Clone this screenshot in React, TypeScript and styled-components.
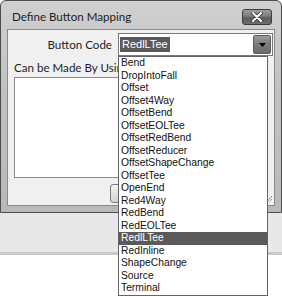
import styled, { createGlobalStyle } from 'styled-components';

const GlobalStyle = createGlobalStyle`
  html, body {
    margin: 0;
    padding: 0;
    background: #fff;
  }
  #root {
    width: 282px;
    height: 297px;
    overflow: hidden;
  }
`;

const codes = [
  'Bend',
  'DropIntoFall',
  'Offset',
  'Offset4Way',
  'OffsetBend',
  'OffsetEOLTee',
  'OffsetRedBend',
  'OffsetReducer',
  'OffsetShapeChange',
  'OffsetTee',
  'OpenEnd',
  'Red4Way',
  'RedBend',
  'RedEOLTee',
  'RedlLTee',
  'RedInline',
  'ShapeChange',
  'Source',
  'Terminal',
];

const selected = 'RedlLTee';

const Screen = styled.div`
  position: relative;
  width: 282px;
  height: 297px;
  display: flex;
  flex-direction: column;
  background: #fff;
  font-family: Lato, 'Noto Sans', sans-serif;
`;

const Window = styled.div`
  height: 213px;
  box-sizing: border-box;
  border: 1px solid #4c4c4c;
  border-radius: 6px 6px 0 0;
  background: linear-gradient(180deg, #d0d0d0 0%, #c2c2c2 40%, #b9b9b9 100%);
  padding: 0 6px 6px;
  display: flex;
  flex-direction: column;
`;

const TitleBar = styled.div`
  height: 28px;
  box-sizing: border-box;
  padding: 3px 3px 0 5px;
  display: flex;
  align-items: center;
  justify-content: space-between;
`;

const Title = styled.span`
  font-size: 11.6px;
  color: #1e1e1e;
`;

const CloseButton = styled.div`
  width: 30px;
  height: 16px;
  box-sizing: border-box;
  border: 1px solid #3c3c3c;
  border-radius: 3px;
  background: linear-gradient(180deg, #a0a0a0 0%, #7a7a7a 45%, #5c5c5c 55%, #6e6e6e 100%);
  display: flex;
  align-items: center;
  justify-content: center;
`;

const Client = styled.div`
  position: relative;
  flex: 1;
  border: 1px solid #8a8a8a;
  background: #f0f0f0;
  display: flex;
  flex-direction: column;
`;

const CodeRow = styled.div`
  display: grid;
  grid-template-columns: 104px 1fr;
  column-gap: 6px;
  align-items: center;
  padding: 3px 1px 0 0;
`;

const Label = styled.span`
  font-size: 11.6px;
  color: #1e1e1e;
  white-space: nowrap;
`;

const RightLabel = styled(Label)`
  text-align: right;
`;

const Combo = styled.div`
  height: 23px;
  box-sizing: border-box;
  border: 1px solid #7a7a7a;
  background: #fff;
  display: flex;
  align-items: center;
  justify-content: space-between;
  padding: 0 1px 0 1px;
`;

const ComboText = styled.span`
  font-family: 'Liberation Sans', Arial, sans-serif;
  font-size: 11px;
  line-height: 15px;
  padding: 0 2px 0 2px;
  background: #5a5a5a;
  color: #fff;
`;

const DropButton = styled.div`
  width: 18px;
  height: 19px;
  box-sizing: border-box;
  border: 1px solid #5a5a5a;
  border-radius: 2px;
  background: linear-gradient(180deg, #9a9a9a 0%, #7c7c7c 50%, #6a6a6a 100%);
  display: flex;
  align-items: center;
  justify-content: center;
`;

/* the open list covers the end of this label, so clip it where the list begins */
const UsingLabel = styled(Label)`
  display: block;
  width: 104px;
  overflow: hidden;
  padding: 4px 0 0 6px;
  line-height: 15px;
`;

const UsingBox = styled.div`
  margin: 2px 6px 0 6px;
  height: 99px;
  border: 1px solid #8c8c8c;
  background: #fff;
`;

const ButtonRow = styled.div`
  display: flex;
  justify-content: center;
  padding-top: 6px;
`;

const PushButton = styled.div`
  width: 63px;
  height: 19px;
  box-sizing: border-box;
  border: 1px solid #7c7c7c;
  border-radius: 3px;
  background: linear-gradient(180deg, #f2f2f2 0%, #e2e2e2 50%, #d2d2d2 100%);
`;

const Grip = styled.svg`
  position: absolute;
  right: 1px;
  bottom: 1px;
`;

const Strip = styled.div`
  height: 39px;
  background: #e8e8e8;
  border-bottom: 3px solid #c9c9c9;
`;

const DropList = styled.div`
  position: absolute;
  left: 118px;
  top: 56px;
  width: 150px;
  box-sizing: border-box;
  border: 1px solid #646464;
  background: #fff;
  display: flex;
  flex-direction: column;
`;

const Item = styled.div<{ $active?: boolean }>`
  height: 12.5px;
  line-height: 12.5px;
  padding-left: 2px;
  font-family: 'Liberation Sans', Arial, sans-serif;
  font-size: 10.3px;
  white-space: nowrap;
  color: ${(p) => (p.$active ? '#fff' : '#111')};
  background: ${(p) => (p.$active ? '#5a5a5a' : 'transparent')};
`;

export default function App() {
  return (
    <>
      <GlobalStyle />
      <Screen>
        <Window>
          <TitleBar>
            <Title>Define Button Mapping</Title>
            <CloseButton>
              <svg width="12" height="10" viewBox="0 0 12 10">
                <path d="M2 1 L10 9 M10 1 L2 9" stroke="#3a3a3a" strokeWidth="3.6" strokeLinecap="round" />
                <path d="M2 1 L10 9 M10 1 L2 9" stroke="#fff" strokeWidth="2" strokeLinecap="round" />
              </svg>
            </CloseButton>
          </TitleBar>
          <Client>
            <CodeRow>
              <RightLabel>Button Code</RightLabel>
              <Combo>
                <ComboText>{selected}</ComboText>
                <DropButton>
                  <svg width="7" height="4" viewBox="0 0 7 4">
                    <path d="M0 0 H7 L3.5 4 Z" fill="#000" />
                  </svg>
                </DropButton>
              </Combo>
            </CodeRow>
            <UsingLabel>Can be Made By Using</UsingLabel>
            <UsingBox />
            <ButtonRow>
              <PushButton />
            </ButtonRow>
            <Grip width="7" height="10" viewBox="0 0 7 10">
              <path d="M6 2 L1 8 M6 5 L3 8.5" stroke="#8a8a8a" strokeWidth="1" />
              <path d="M6.8 2.8 L1.8 8.8 M6.8 5.8 L3.8 9.3" stroke="#fff" strokeWidth="1" />
            </Grip>
          </Client>
        </Window>
        <Strip />
        <DropList>
          {codes.map((c) => (
            <Item key={c} $active={c === selected}>
              {c}
            </Item>
          ))}
        </DropList>
      </Screen>
    </>
  );
}
